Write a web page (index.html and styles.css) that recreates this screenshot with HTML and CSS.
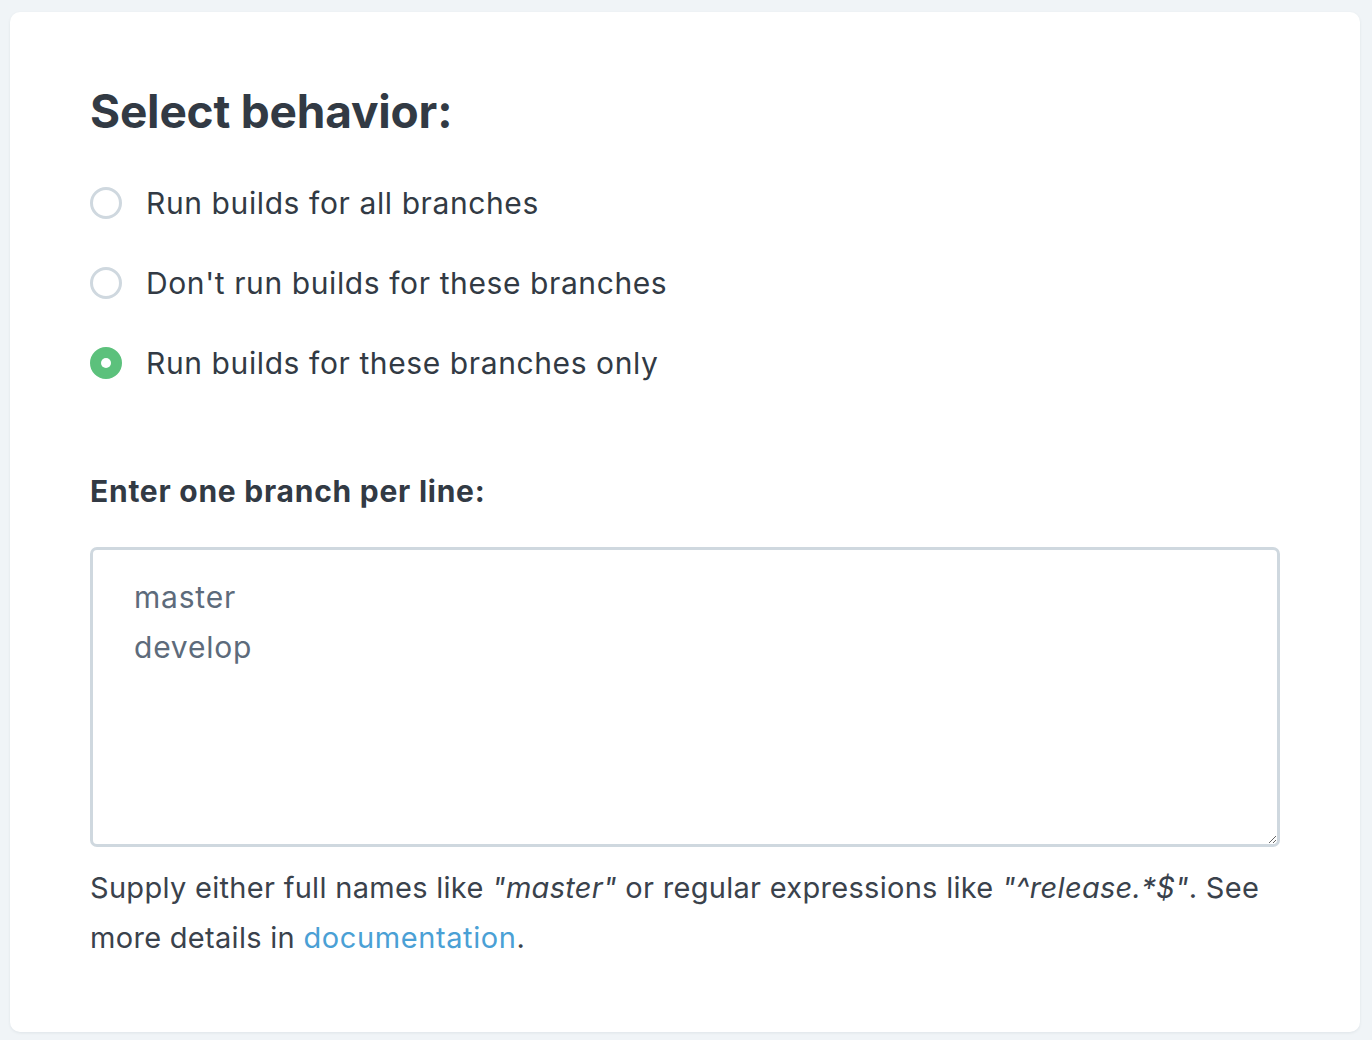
FILE: index.html
```html
<!DOCTYPE html>
<html>
<head>
<meta charset="utf-8">
<link rel="stylesheet" href="styles.css">
</head>
<body>
<div class="card">
  <h1 class="title">Select behavior:</h1>
  <div class="options">
    <label class="option"><span class="radio"></span><span class="label">Run builds for all branches</span></label>
    <label class="option"><span class="radio"></span><span class="label">Don't run builds for these branches</span></label>
    <label class="option"><span class="radio checked"></span><span class="label">Run builds for these branches only</span></label>
  </div>
  <h2 class="subtitle">Enter one branch per line:</h2>
  <textarea class="branches">master
develop</textarea>
  <p class="help">Supply either full names like <em>"master"</em> or regular expressions like <em>"^release.*$"</em>. See more details in <a class="link" href="#">documentation</a>.</p>
</div>
</body>
</html>
```
FILE: styles.css
```css
html, body {
  margin: 0;
  padding: 0;
  background: #f0f4f7;
  font-family: Inter, "Noto Sans", sans-serif;
  color: #323a44;
}
body {
  padding: 12px 12px 8px 10px;
}
.card {
  box-sizing: border-box;
  height: 1020px;
  background: #fff;
  border-radius: 10px;
  box-shadow: 0 1px 3px rgba(30, 50, 70, 0.08);
  padding: 71px 80px 0 80px;
}
.title {
  margin: 0;
  font-size: 46px;
  font-weight: 700;
  line-height: 56px;
  letter-spacing: -0.2px;
}
.options {
  display: flex;
  flex-direction: column;
  gap: 40px;
  margin-top: 44px;
}
.option {
  display: flex;
  align-items: center;
  gap: 24px;
  height: 40px;
}
.radio {
  width: 26px;
  height: 26px;
  border: 3px solid #cfd8df;
  border-radius: 50%;
  box-sizing: content-box;
  background: #fff;
  position: relative;
}
.radio.checked {
  background: #5cc17c;
  border-color: #5cc17c;
}
.radio.checked::after {
  content: "";
  position: absolute;
  left: 50%;
  top: 50%;
  width: 10px;
  height: 10px;
  margin: -5px 0 0 -5px;
  border-radius: 50%;
  background: #fff;
}
.label {
  font-size: 30px;
  line-height: 40px;
  letter-spacing: 0.6px;
}
.subtitle {
  margin: 88px 0 0 0;
  font-size: 30px;
  font-weight: 700;
  line-height: 40px;
  letter-spacing: 0.75px;
}
.branches {
  display: block;
  box-sizing: border-box;
  width: 100%;
  height: 300px;
  margin-top: 36px;
  border: 3px solid #cfd8df;
  border-radius: 7px;
  padding: 22px 41px;
  font-family: Inter, "Noto Sans", sans-serif;
  font-size: 30px;
  line-height: 50px;
  letter-spacing: 0.8px;
  color: #5d6b7b;
  resize: vertical;
  outline: none;
}
.help {
  margin: 16px 0 0 0;
  font-size: 29px;
  line-height: 50px;
  letter-spacing: 0.3px;
  color: #3a424c;
}
.help em {
  font-style: italic;
}
.link {
  color: #4aa0d5;
  text-decoration: none;
  letter-spacing: 0.6px;
}
```
